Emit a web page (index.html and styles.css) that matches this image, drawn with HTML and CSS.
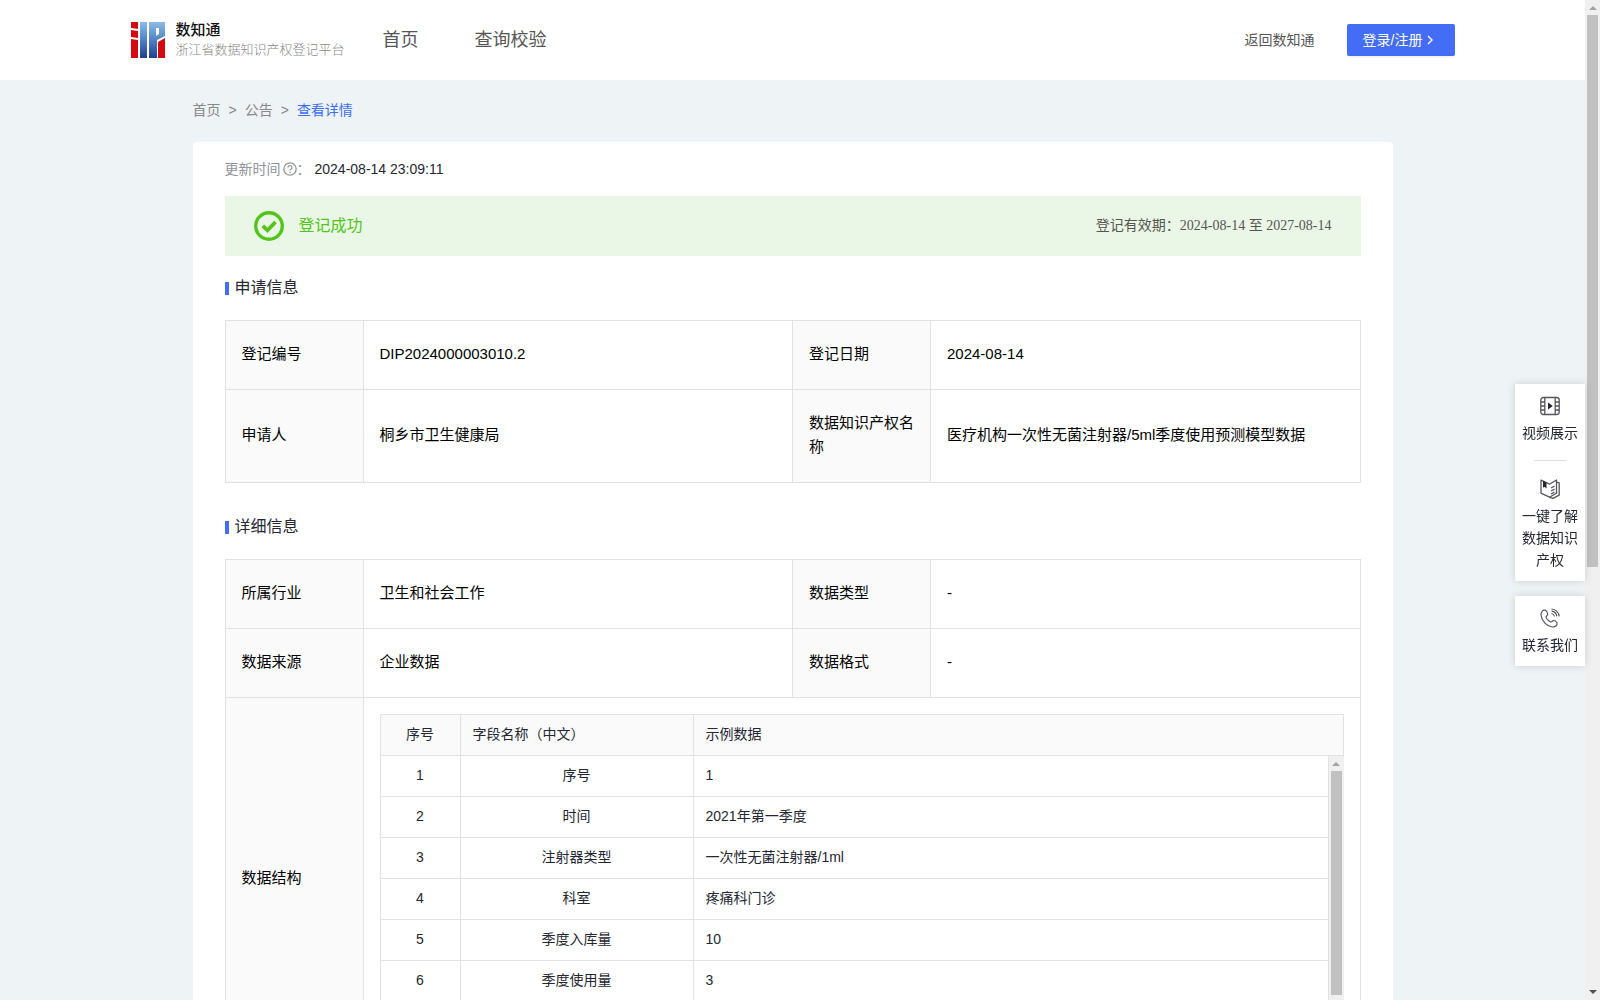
FILE: index.html
```html
<!DOCTYPE html>
<html lang="zh-CN">
<head>
<meta charset="utf-8">
<meta name="viewport" content="width=device-width, initial-scale=1">
<title>数知通 - 登记公告详情</title>
<link rel="stylesheet" href="styles.css">
</head>
<body>
<div class="shell">
  <div class="page">
    <header class="header">
      <div class="header-inner">
        <a class="brand" href="#">
          <svg class="brand-logo" width="34" height="36" viewBox="0 0 34 36" aria-hidden="true">
            <defs>
              <linearGradient id="blue" gradientUnits="userSpaceOnUse" x1="0" y1="0" x2="0" y2="36">
                <stop offset="0" stop-color="#8dbbe6"/>
                <stop offset="0.4" stop-color="#5b8fce"/>
                <stop offset="1" stop-color="#1f3f8c"/>
              </linearGradient>
            </defs>
            <path fill="#d40a10" d="M0 0h7v7L0 6zM0 8l7 1v7l-7-1zM0 17l7 1v18H0zM27 20l7-4v20h-7z"/>
            <path fill="url(#blue)" d="M9 0h7v36H9zM18 0h16v14l-8 4v18h-8z"/>
            <path fill="#fff" d="M25 6h3v6l-3 2z"/>
          </svg>
          <span class="brand-text">
            <strong>数知通</strong>
            <span>浙江省数据知识产权登记平台</span>
          </span>
        </a>
        <nav class="nav">
          <a href="#">首页</a>
          <a href="#">查询校验</a>
        </nav>
        <a class="back" href="#">返回数知通</a>
        <button class="login" type="button">登录/注册
          <svg width="8" height="10" viewBox="0 0 8 10" aria-hidden="true"><path d="M2 1l4 4-4 4" fill="none" stroke="#fff" stroke-width="1.4"/></svg>
        </button>
      </div>
    </header>

    <main class="container">
      <nav class="crumbs">
        <a href="#">首页</a><span>&gt;</span><a href="#">公告</a><span>&gt;</span><a class="current" href="#">查看详情</a>
      </nav>

      <article class="card">
        <div class="updated">
          <span class="updated-label">更新时间<svg width="14" height="14" viewBox="0 0 14 14" aria-hidden="true"><circle cx="7" cy="7" r="6.2" fill="none" stroke="#909399" stroke-width="1.3"/><path d="M5 5.6a2 2 0 1 1 2.900 1.700c-.6.300-.9.600-.9 1.200" fill="none" stroke="#909399" stroke-width="1.200"/><circle cx="7" cy="10.200" r=".8" fill="#909399"/></svg>：</span>
          <time>2024-08-14 23:09:11</time>
        </div>

        <div class="status">
          <svg width="30" height="30" viewBox="0 0 30 30" aria-hidden="true"><circle cx="15" cy="15" r="13.300" fill="none" stroke="#52c41a" stroke-width="3.400"/><path d="M8.800 14.800l4.700 4.500 8-8.300" fill="none" stroke="#52c41a" stroke-width="3.800"/></svg>
          <span class="status-text">登记成功</span>
          <span class="validity">登记有效期：2024-08-14 至 2027-08-14</span>
        </div>

        <h2 class="section-title">申请信息</h2>
        <table class="info">
          <colgroup><col class="c-label"><col><col class="c-label"><col></colgroup>
          <tr><th>登记编号</th><td>DIP2024000003010.2</td><th>登记日期</th><td>2024-08-14</td></tr>
          <tr><th>申请人</th><td>桐乡市卫生健康局</td><th>数据知识产权名称</th><td>医疗机构一次性无菌注射器/5ml季度使用预测模型数据</td></tr>
        </table>

        <h2 class="section-title">详细信息</h2>
        <table class="info">
          <colgroup><col class="c-label"><col><col class="c-label"><col></colgroup>
          <tr><th>所属行业</th><td>卫生和社会工作</td><th>数据类型</th><td>-</td></tr>
          <tr><th>数据来源</th><td>企业数据</td><th>数据格式</th><td>-</td></tr>
          <tr>
            <th>数据结构</th>
            <td class="nested" colspan="3">
              <table class="fields fields-head">
                <colgroup><col class="c-no"><col class="c-name"><col></colgroup>
                <tr><th class="center">序号</th><th>字段名称（中文）</th><th>示例数据</th></tr>
              </table>
              <div class="fields-body">
                <table class="fields">
                  <colgroup><col class="c-no"><col class="c-name"><col></colgroup>
                  <tr><td>1</td><td>序号</td><td>1</td></tr>
                  <tr><td>2</td><td>时间</td><td>2021年第一季度</td></tr>
                  <tr><td>3</td><td>注射器类型</td><td>一次性无菌注射器/1ml</td></tr>
                  <tr><td>4</td><td>科室</td><td>疼痛科门诊</td></tr>
                  <tr><td>5</td><td>季度入库量</td><td>10</td></tr>
                  <tr><td>6</td><td>季度使用量</td><td>3</td></tr>
                  <tr><td></td><td></td><td></td></tr>
                </table>
                <div class="scrollbar" aria-hidden="true"><i class="arrow up"></i><i class="thumb thumb-fields"></i><i class="arrow down"></i></div>
              </div>
            </td>
          </tr>
        </table>
      </article>
    </main>
  </div>
  <div class="scrollbar" aria-hidden="true"><i class="arrow up"></i><i class="thumb thumb-page"></i><i class="arrow down"></i></div>
</div>

<aside class="side">
  <div class="side-card">
    <a href="#">
      <svg width="20" height="20" viewBox="0 0 20 20" aria-hidden="true"><g fill="none" stroke="#55555e" stroke-width="1.300"><rect x=".8" y="1.500" width="18.400" height="17" rx="2.500"/><path d="M4.800 2v16M15.200 2v16M1 6h4M1 10h4M1 14h4M15 6h4M15 10h4M15 14h4"/></g><path d="M8 6.500l4.800 3.500L8 13.500z" fill="#252632"/></svg>
      视频展示
    </a>
    <hr>
    <a href="#">
      <svg width="20" height="20" viewBox="0 0 20 20" aria-hidden="true"><g fill="none" stroke="#55555e" stroke-width="1.300" stroke-linejoin="round"><path d="M1 1.200l8.500 4L16.500 1v13.200l-7 4-8.500-4zM16.500 3.200l2.700.6v12.400l-6.200 3.100-3.500-1"/><path d="M11 9l3.500-1.800M11 12l3.500-1.800M11 15l3.500-1.800"/></g><path d="M3 1.800l3.500 1.600v6.200L4.800 8 3 8.500z" fill="#252632"/></svg>
      一键了解数据知识产权
    </a>
  </div>
  <div class="side-card">
    <a href="#">
      <svg width="20" height="20" viewBox="0 0 20 20" aria-hidden="true"><g fill="none" stroke="#55555e" stroke-width="1.200"><path d="M5.500 2.200C3 1.500.8 4 1 7c.6 6 6 11.500 11.500 12 3 .2 5.300-2.200 4.500-4.300-.6-1-2.800-2.200-3.700-2.200-1.200.2-1.400 1.500-2.500 1.500C9 13.600 6.200 10.500 6 9c0-1.200 1.500-1.300 1.700-2.500 0-1.200-1.200-3.700-2.200-4.300z"/><path d="M11.500 5.500c1.600.3 2.700 1.500 3 3M11.500 3.200c2.700.3 5 2.500 5.300 5.200M11.500 1c4 .2 7.500 3.500 7.700 7.400"/></g></svg>
      联系我们
    </a>
  </div>
</aside>
</body>
</html>
```
FILE: styles.css
```css
* { box-sizing: border-box; }

body {
  margin: 0;
  font-family: "Liberation Sans", "Noto Sans CJK SC", sans-serif;
  font-size: 14px;
  line-height: 20px;
  color: #252632;
  background: #eef3f6;
}

a { color: inherit; text-decoration: none; }
svg { display: block; flex: none; }

.shell { display: flex; height: 100vh; }
.page { flex: 1; min-width: 0; overflow: hidden; }

/* header */
.header { background: #fff; padding: 0 16px; }
.header-inner {
  display: flex;
  align-items: center;
  max-width: 1324px;
  height: 80px;
  margin: 0 auto;
  color: #555;
}
.brand { display: flex; align-items: center; gap: 11px; }
.brand-text { display: flex; flex-direction: column; }
.brand-text strong { font-size: 15px; font-weight: 500; color: #111; }
.brand-text span { font-size: 13px; font-weight: 300; color: #888; }
.nav { display: flex; gap: 56px; margin-left: 38px; font-size: 18px; }
.back { margin-left: auto; }
.login {
  display: flex;
  align-items: center;
  gap: 4px;
  width: 108px;
  height: 32px;
  margin-left: 32px;
  padding: 0 16px;
  border: 0;
  border-radius: 2px;
  background: #446df6;
  box-shadow: 0 2px 0 rgba(0, 0, 0, .04);
  color: #fff;
  font: inherit;
  white-space: nowrap;
}

/* content */
.container { max-width: 1200px; margin: 0 auto; }
.crumbs { display: flex; gap: 8px; padding: 20px 0 22px; color: #888; }
.crumbs .current { color: #3d6cf5; }
.card { padding: 16px 32px 32px; border-radius: 4px; background: #fff; }

.updated { display: flex; line-height: 22px; }
.updated-label { display: flex; align-items: center; color: #909399; }
.updated-label svg { margin-left: 2px; }
.updated time { margin-left: 4px; }

.status {
  display: flex;
  align-items: center;
  height: 60px;
  margin-top: 16px;
  padding: 0 29px;
  background: #ebf7e6;
}
.status-text { margin-left: 15px; font-size: 16px; color: #52c41a; }
.validity {
  margin-left: auto;
  font-family: "Liberation Serif", "Noto Sans CJK SC", serif;
  color: #555;
}

.section-title {
  display: flex;
  align-items: center;
  gap: 6px;
  margin: 20px 0;
  font-size: 16px;
  font-weight: 400;
  line-height: 24px;
}
.section-title::before { content: ""; width: 4px; height: 13px; background: #446df6; }
.info + .section-title { margin-top: 32px; }

/* label / value tables */
.info, .fields { width: 100%; border-collapse: collapse; table-layout: fixed; }
.info th, .info td {
  padding: 21px 16px 23px;
  border: 1px solid #e1e1e1;
  font-size: 15px;
  font-weight: 400;
  line-height: 24px;
  text-align: left;
  color: #000;
}
.info th { padding-right: 12px; background: #fafafa; }
.c-label { width: 138px; }
.info .nested { padding: 16px; }

.info .fields th, .info .fields td {
  height: 41px;
  padding: 9px 12px 11px;
  font-size: 14px;
  line-height: 20px;
  color: #252632;
}
.fields .c-no { width: 80px; }
.fields .c-name { width: 233px; }
.info .fields .center, .info .fields td:nth-child(-n+2) { text-align: center; }
.fields-body { display: flex; height: 287px; overflow: hidden; }
.fields-body .fields { flex: 1; min-width: 0; align-self: flex-start; margin-top: -1px; }

/* scrollbars */
.scrollbar {
  display: flex;
  flex: none;
  flex-direction: column;
  align-items: center;
  width: 15px;
  background: #f0f0f0;
}
.arrow { border: 4px solid transparent; }
.arrow.up { margin: 2px 0 5px; border-bottom-color: #a3a3a3; }
.arrow.down { margin: auto 0 2px; border-top-color: #505050; }
.thumb { width: 11px; background: #c1c1c1; }
.thumb-page { height: 552px; }
.thumb-fields { height: 224px; }

/* floating shortcuts */
.side {
  position: fixed;
  top: 384px;
  right: 15px;
  display: flex;
  flex-direction: column;
  gap: 15px;
  width: 70px;
}
.side-card {
  padding: 12px 7px 10px;
  background: #fff;
  box-shadow: 0 0 8px rgba(0, 0, 0, .15);
  text-align: center;
  line-height: 22px;
}
.side-card a { display: block; }
.side-card svg { margin: 0 auto 6px; }
.side-card hr { width: 32px; height: 1px; margin: 16px auto 18px; border: 0; background: #ddd; }
```
